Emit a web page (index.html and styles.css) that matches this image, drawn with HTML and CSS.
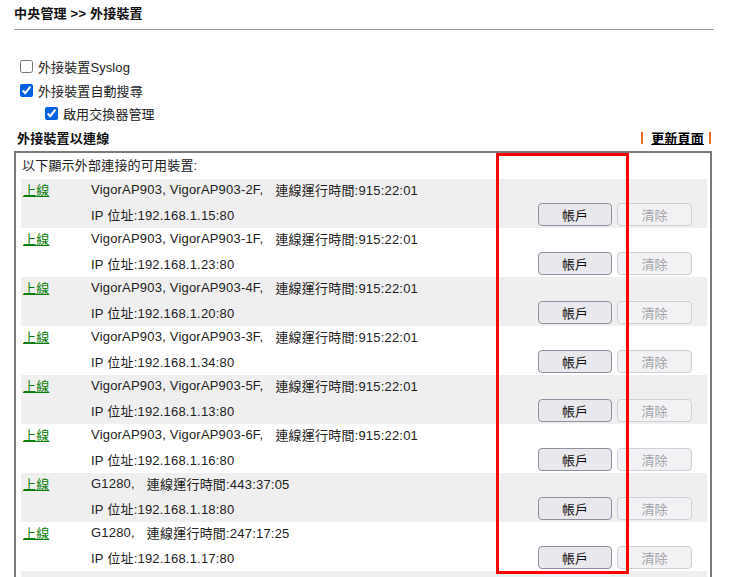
FILE: index.html
```html
<!DOCTYPE html>
<html lang="zh-Hant">
<head>
<meta charset="utf-8">
<title>外接裝置</title>
<link rel="stylesheet" href="styles.css">
</head>
<body>
<div class="page">
  <div class="header">中央管理 &gt;&gt; 外接裝置</div>
  <div class="options">
    <label class="opt"><input type="checkbox"><span>外接裝置Syslog</span></label>
    <label class="opt"><input type="checkbox" checked><span>外接裝置自動搜尋</span></label>
    <label class="opt sub"><input type="checkbox" checked><span>啟用交換器管理</span></label>
  </div>
  <div class="section-head">
    <span class="section-title">外接裝置以連線</span>
    <span class="refresh"><span class="bar"></span><a href="#">更新頁面</a><span class="bar"></span></span>
  </div>
  <div class="box">
    <div class="intro">以下顯示外部連接的可用裝置:</div>

    <div class="row alt">
      <div class="line1"><a class="status" href="#">上線</a><span class="info">VigorAP903, VigorAP903-2F,</span><span class="uptime">連線運行時間:915:22:01</span></div>
      <div class="line2"><span class="info">IP 位址:192.168.1.15:80</span><div class="btns"><button class="btn">帳戶</button><button class="btn" disabled>清除</button></div></div>
    </div>
    <div class="row">
      <div class="line1"><a class="status" href="#">上線</a><span class="info">VigorAP903, VigorAP903-1F,</span><span class="uptime">連線運行時間:915:22:01</span></div>
      <div class="line2"><span class="info">IP 位址:192.168.1.23:80</span><div class="btns"><button class="btn">帳戶</button><button class="btn" disabled>清除</button></div></div>
    </div>
    <div class="row alt">
      <div class="line1"><a class="status" href="#">上線</a><span class="info">VigorAP903, VigorAP903-4F,</span><span class="uptime">連線運行時間:915:22:01</span></div>
      <div class="line2"><span class="info">IP 位址:192.168.1.20:80</span><div class="btns"><button class="btn">帳戶</button><button class="btn" disabled>清除</button></div></div>
    </div>
    <div class="row">
      <div class="line1"><a class="status" href="#">上線</a><span class="info">VigorAP903, VigorAP903-3F,</span><span class="uptime">連線運行時間:915:22:01</span></div>
      <div class="line2"><span class="info">IP 位址:192.168.1.34:80</span><div class="btns"><button class="btn">帳戶</button><button class="btn" disabled>清除</button></div></div>
    </div>
    <div class="row alt">
      <div class="line1"><a class="status" href="#">上線</a><span class="info">VigorAP903, VigorAP903-5F,</span><span class="uptime">連線運行時間:915:22:01</span></div>
      <div class="line2"><span class="info">IP 位址:192.168.1.13:80</span><div class="btns"><button class="btn">帳戶</button><button class="btn" disabled>清除</button></div></div>
    </div>
    <div class="row">
      <div class="line1"><a class="status" href="#">上線</a><span class="info">VigorAP903, VigorAP903-6F,</span><span class="uptime">連線運行時間:915:22:01</span></div>
      <div class="line2"><span class="info">IP 位址:192.168.1.16:80</span><div class="btns"><button class="btn">帳戶</button><button class="btn" disabled>清除</button></div></div>
    </div>
    <div class="row alt">
      <div class="line1"><a class="status" href="#">上線</a><span class="info">G1280,</span><span class="uptime">連線運行時間:443:37:05</span></div>
      <div class="line2"><span class="info">IP 位址:192.168.1.18:80</span><div class="btns"><button class="btn">帳戶</button><button class="btn" disabled>清除</button></div></div>
    </div>
    <div class="row">
      <div class="line1"><a class="status" href="#">上線</a><span class="info">G1280,</span><span class="uptime">連線運行時間:247:17:25</span></div>
      <div class="line2"><span class="info">IP 位址:192.168.1.17:80</span><div class="btns"><button class="btn">帳戶</button><button class="btn" disabled>清除</button></div></div>
    </div>
    <div class="row alt"></div>
  </div>
  <div class="highlight"></div>
</div>
</body>
</html>
```

FILE: styles.css
```css
html, body {
  margin: 0;
  padding: 0;
  background: #fff;
}
body {
  font-family: "Liberation Sans", Arial, "Noto Sans CJK TC", sans-serif;
  font-size: 13px;
  letter-spacing: 0.2px;
  color: #222;
}
.page {
  position: relative;
  width: 700px;
  padding-left: 14px;
}
.header {
  font-weight: bold;
  height: 29px;
  line-height: 28px;
  border-bottom: 1px solid #9a9a9a;
  color: #111;
}
.options {
  padding-top: 25px;
  display: flex;
  flex-direction: column;
}
.opt {
  display: flex;
  align-items: center;
  height: 23.5px;
  padding-left: 6px;
  letter-spacing: 0.1px;
}
.opt input {
  margin: 0 5px 0 0;
  width: 13px;
  height: 13px;
  accent-color: #0060df;
}
.opt.sub {
  padding-left: 31px;
}
.section-head {
  display: flex;
  justify-content: space-between;
  align-items: center;
  height: 24px;
  padding-left: 3px;
  font-weight: bold;
  color: #111;
}
.refresh {
  display: flex;
  align-items: center;
  margin-right: 3px;
}
.refresh a {
  color: #000;
  text-decoration: underline;
  margin: 0 5px 0 8px;
}
.bar {
  display: inline-block;
  width: 2px;
  height: 12px;
  background: #ec6a2a;
}
.box {
  border: 2px solid #7a7a7a;
  padding: 0 3px 0 5px;
  box-sizing: border-box;
  width: 698px;
  margin-top: 1px;
}
.intro {
  height: 26px;
  line-height: 26px;
  padding-left: 1px;
}
.row {
  height: 49px;
}
.row.alt {
  background: #efefef;
}
.line1 {
  display: flex;
  align-items: center;
  height: 22px;
  padding-left: 2px;
}
.status {
  width: 68px;
  color: #0a7d0a;
  text-decoration: underline;
}
.uptime {
  margin-left: 12px;
}
.line2 {
  display: flex;
  align-items: center;
  height: 27px;
  padding-left: 70px;
  padding-right: 15px;
  justify-content: space-between;
}
.btns {
  display: flex;
  gap: 5px;
}
.btn {
  width: 74px;
  height: 23px;
  padding: 0;
  font-family: "Liberation Sans", Arial, "Noto Sans CJK TC", sans-serif;
  font-size: 13px;
  color: #111;
  background: #e9e9ed;
  border: 1px solid #8f8f9d;
  border-radius: 4px;
}
.btn:disabled {
  width: 75px;
  color: #a3a3aa;
  background: #f2f2f4;
  border-color: #cfcfd6;
}
.highlight {
  position: absolute;
  left: 496px;
  top: 153px;
  width: 127px;
  height: 415px;
  border: 3px solid #ff0000;
  pointer-events: none;
}
```
